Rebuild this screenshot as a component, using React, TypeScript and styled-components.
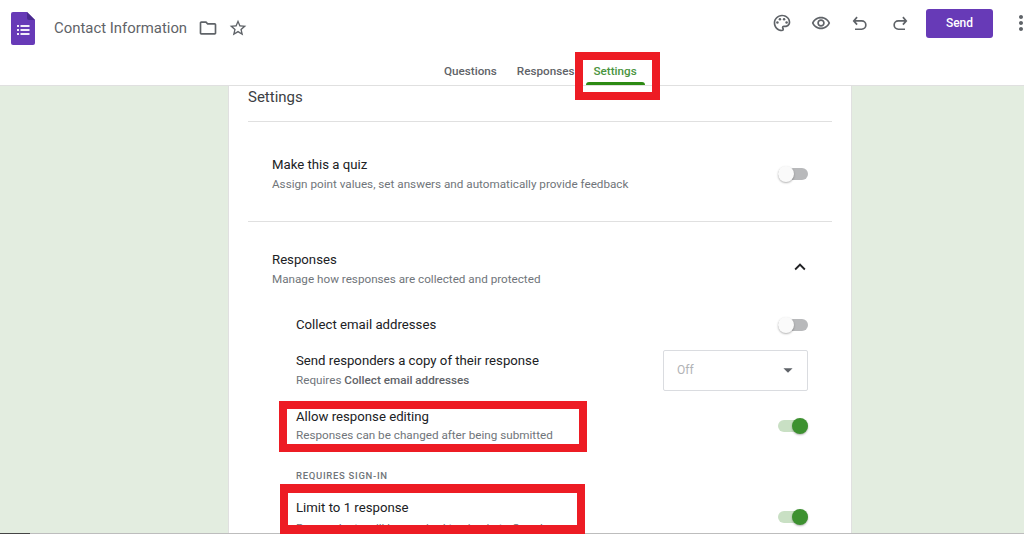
import { createGlobalStyle } from 'styled-components';
import styled from 'styled-components';
import { MdOutlinePalette, MdOutlineRemoveRedEye, MdMoreVert, MdOutlineFolder, MdStarBorder, MdKeyboardArrowUp, MdArrowDropDown } from 'react-icons/md';

const GlobalStyle = createGlobalStyle`
  html, body {
    margin: 0;
    height: 534px;
    overflow: hidden;
    background: #fff;
    font-family: Roboto, "Liberation Sans", sans-serif;
  }
`;

function FormsLogo() {
  return (
    <LogoSvg viewBox="0 0 24 33" aria-label="Forms">
      <path d="M2 0h14l8 8v23a2 2 0 0 1-2 2H2a2 2 0 0 1-2-2V2a2 2 0 0 1 2-2z" fill="#673ab7" />
      <path d="M16 0l8 8h-6a2 2 0 0 1-2-2z" fill="#4a2a8f" />
      <g fill="#f1ecf9">
        <rect x="6" y="13" width="2" height="2" />
        <rect x="9.5" y="13" width="9" height="2" />
        <rect x="6" y="17" width="2" height="2" />
        <rect x="9.5" y="17" width="9" height="2" />
        <rect x="6" y="21" width="2" height="2" />
        <rect x="9.5" y="21" width="9" height="2" />
      </g>
    </LogoSvg>
  );
}

function UndoIcon({ flip }: { flip?: boolean }) {
  return (
    <HistorySvg $flip={flip} viewBox="0 0 24 24">
      <path d="M8.5 5 L4.5 9.5 L8.5 14 M4.5 9.5 H14 a5 5 0 0 1 0 10 H6" />
    </HistorySvg>
  );
}

function App() {
  return (
    <Page>
      <GlobalStyle />
      <Header>
        <TopRow>
          <TitleGroup>
            <FormsLogo />
            <Title>Contact Information</Title>
            <MdOutlineFolder size={20} color="#5f6368" />
            <MdStarBorder size={20} color="#5f6368" />
          </TitleGroup>
          <Actions>
            <MdOutlinePalette size={20} color="#5f6368" />
            <MdOutlineRemoveRedEye size={20} color="#5f6368" />
            <UndoIcon />
            <RedoSlot>
              <UndoIcon flip />
            </RedoSlot>
            <SendButton>Send</SendButton>
            <MoreIcon size={24} color="#5f6368" />
          </Actions>
        </TopRow>
        <Tabs>
          <Tab>Questions</Tab>
          <Tab>Responses</Tab>
          <Tab $active>
            Settings
            <Marker />
          </Tab>
        </Tabs>
      </Header>

      <Main>
        <Card>
          <CardTitle>Settings</CardTitle>

          <Section>
            <Row>
              <div>
                <RowTitle>Make this a quiz</RowTitle>
                <RowText>Assign point values, set answers and automatically provide feedback</RowText>
              </div>
              <Toggle />
            </Row>
          </Section>

          <ResponsesSection>
            <Row>
              <div>
                <RowTitle>Responses</RowTitle>
                <RowText>Manage how responses are collected and protected</RowText>
              </div>
              <Chevron size={22} color="#202124" />
            </Row>

            <SubRows>
              <CollectRow>
                <RowTitle>Collect email addresses</RowTitle>
                <Toggle />
              </CollectRow>

              <CopyRow>
                <div>
                  <RowTitle>Send responders a copy of their response</RowTitle>
                  <RowText>
                    Requires <b>Collect email addresses</b>
                  </RowText>
                </div>
                <Select>
                  Off
                  <MdArrowDropDown size={22} color="#5f6368" />
                </Select>
              </CopyRow>

              <EditRow>
                <div>
                  <RowTitle>Allow response editing</RowTitle>
                  <EditText>Responses can be changed after being submitted</EditText>
                </div>
                <Toggle $on />
              </EditRow>

              <SignIn>REQUIRES SIGN-IN</SignIn>

              <LimitRow>
                <div>
                  <RowTitle>Limit to 1 response</RowTitle>
                  <LimitText>Respondents will be required to sign in to Google</LimitText>
                </div>
                <LimitToggle $on />
              </LimitRow>
            </SubRows>
          </ResponsesSection>
        </Card>
      </Main>

      <ScrollTrack>
        <ScrollThumb />
      </ScrollTrack>
      <TabsMark />
      <EditMark />
      <LimitMark />
    </Page>
  );
}

export default App;

const Page = styled.div`
  position: relative;
  width: 1024px;
  height: 534px;
  overflow: hidden;
  background: #e3ede0;
`;

const Header = styled.header`
  height: 85px;
  background: #fff;
  border-bottom: 1px solid #e0e0e0;
`;

const TopRow = styled.div`
  height: 54px;
  display: flex;
  justify-content: space-between;
  align-items: center;
  padding: 2px 0 0 11px;
  box-sizing: border-box;
`;

const TitleGroup = styled.div`
  display: flex;
  align-items: center;
  gap: 10px;
`;

const LogoSvg = styled.svg`
  width: 24px;
  height: 33px;
  margin-right: 9px;
`;

const Title = styled.div`
  font-size: 14.9px;
  color: #5f6368;
  margin-right: 1px;
`;

const HistorySvg = styled.svg<{ $flip?: boolean }>`
  display: block;
  width: 20px;
  height: 20px;
  fill: none;
  stroke: #5f6368;
  stroke-width: 2;
  transform: ${(p) => (p.$flip ? 'scaleX(-1)' : 'none')};
`;

const RedoSlot = styled.span`
  margin-left: 1px;
`;

const Actions = styled.div`
  display: flex;
  align-items: center;
  gap: 19px;
  padding-bottom: 10px;
`;

const SendButton = styled.button`
  width: 67px;
  height: 29px;
  margin-left: -3px;
  border: 0;
  border-radius: 3px;
  background: #673ab7;
  color: #fff;
  font: 500 12px Roboto, sans-serif;
`;

const MoreIcon = styled(MdMoreVert)`
  margin-left: -3px;
  margin-right: -9px;
`;

const Tabs = styled.nav`
  display: flex;
  gap: 20px;
  padding-left: 444px;
`;

const Tab = styled.div<{ $active?: boolean }>`
  position: relative;
  height: 31px;
  margin-left: ${(p) => (p.$active ? '-1px' : '0')};
  line-height: 34px;
  font-size: 11.7px;
  font-weight: 500;
  color: ${(p) => (p.$active ? '#4a9440' : '#5f6368')};
`;

const Marker = styled.span`
  position: absolute;
  left: -8px;
  right: -8px;
  bottom: 0;
  height: 3px;
  background: #2d8a13;
  border-radius: 3px 3px 0 0;
`;

const Main = styled.main`
  padding-left: 228px;
`;

const Card = styled.div`
  width: 624px;
  box-sizing: border-box;
  padding: 0 19px;
  background: #fff;
  border-left: 1px solid #e0e0e0;
  border-right: 1px solid #e0e0e0;
  min-height: 460px;
`;

const CardTitle = styled.h2`
  margin: 0;
  height: 35px;
  line-height: 23px;
  font-size: 15px;
  font-weight: 400;
  color: #3c4043;
  border-bottom: 1px solid #e0e0e0;
`;

const Section = styled.section`
  height: 94px;
  padding: 5px 24px 0;
  display: flex;
  align-items: center;
  border-bottom: 1px solid #e0e0e0;
`;

const ResponsesSection = styled.section`
  padding: 29px 24px 0;
`;

const Row = styled.div`
  flex: 1;
  display: flex;
  justify-content: space-between;
  align-items: center;
`;

const RowTitle = styled.div`
  font-size: 13.2px;
  line-height: 18px;
  color: #202124;
`;

const RowText = styled.div`
  margin-top: 1px;
  font-size: 11.7px;
  line-height: 18px;
  color: #70757a;

  b {
    font-weight: 500;
    color: #5f6368;
  }
`;

const EditText = styled(RowText)`
  margin-top: 0;
`;

const LimitText = styled(RowText)`
  margin-top: 2px;
`;

const Chevron = styled(MdKeyboardArrowUp)`
  margin-top: -6px;
  margin-right: -3px;
`;

const SubRows = styled.div`
  padding: 28px 0 0 24px;
`;

const CollectRow = styled(Row)`
  height: 18px;
`;

const CopyRow = styled(Row)`
  height: 41px;
  margin-top: 16px;
`;

const EditRow = styled(Row)`
  margin-top: 17px;
`;

const LimitRow = styled(Row)`
  margin-top: 16px;
  align-items: flex-start;
`;

const Select = styled.div`
  width: 145px;
  height: 41px;
  box-sizing: border-box;
  display: flex;
  justify-content: space-between;
  align-items: center;
  padding: 0 8px 1px 13px;
  border: 1px solid #dadce0;
  border-radius: 2px;
  font-size: 12px;
  color: #b1b3b6;
`;

const SignIn = styled.div`
  margin-top: 25px;
  font-size: 9.5px;
  line-height: 14px;
  font-weight: 500;
  letter-spacing: 0.7px;
  color: #70757a;
`;

const Toggle = styled.span<{ $on?: boolean }>`
  position: relative;
  flex: none;
  width: 30px;
  height: 12px;
  margin-bottom: 1px;
  border-radius: 6px;
  background: ${(p) => (p.$on ? '#c9e0c4' : '#b8b9bb')};

  &::after {
    content: '';
    position: absolute;
    top: -2px;
    left: ${(p) => (p.$on ? '14px' : '0')};
    width: 16px;
    height: 16px;
    border-radius: 50%;
    background: ${(p) => (p.$on ? '#3d9130' : '#fafafa')};
    box-shadow: 0 1px 2px rgba(0, 0, 0, 0.3);
  }
`;

const LimitToggle = styled(Toggle)`
  margin-top: 12px;
`;

const TabsMark = styled.div`
  position: absolute;
  left: 575px;
  top: 52px;
  width: 85px;
  height: 48px;
  box-sizing: border-box;
  border: 8px solid #ed1c24;
`;

const EditMark = styled.div`
  position: absolute;
  left: 279px;
  top: 401px;
  width: 308px;
  height: 51px;
  box-sizing: border-box;
  border: 8px solid #ed1c24;
`;

const LimitMark = styled.div`
  position: absolute;
  left: 280px;
  top: 484px;
  width: 305px;
  height: 50px;
  box-sizing: border-box;
  border: solid #ed1c24;
  border-width: 9px 8px;
`;

const ScrollTrack = styled.div`
  position: absolute;
  left: 0;
  right: 0;
  bottom: 0;
  height: 1px;
  background: #bdbdbd;
`;

const ScrollThumb = styled.div`
  width: 30px;
  height: 1px;
  background: #444;
`;
